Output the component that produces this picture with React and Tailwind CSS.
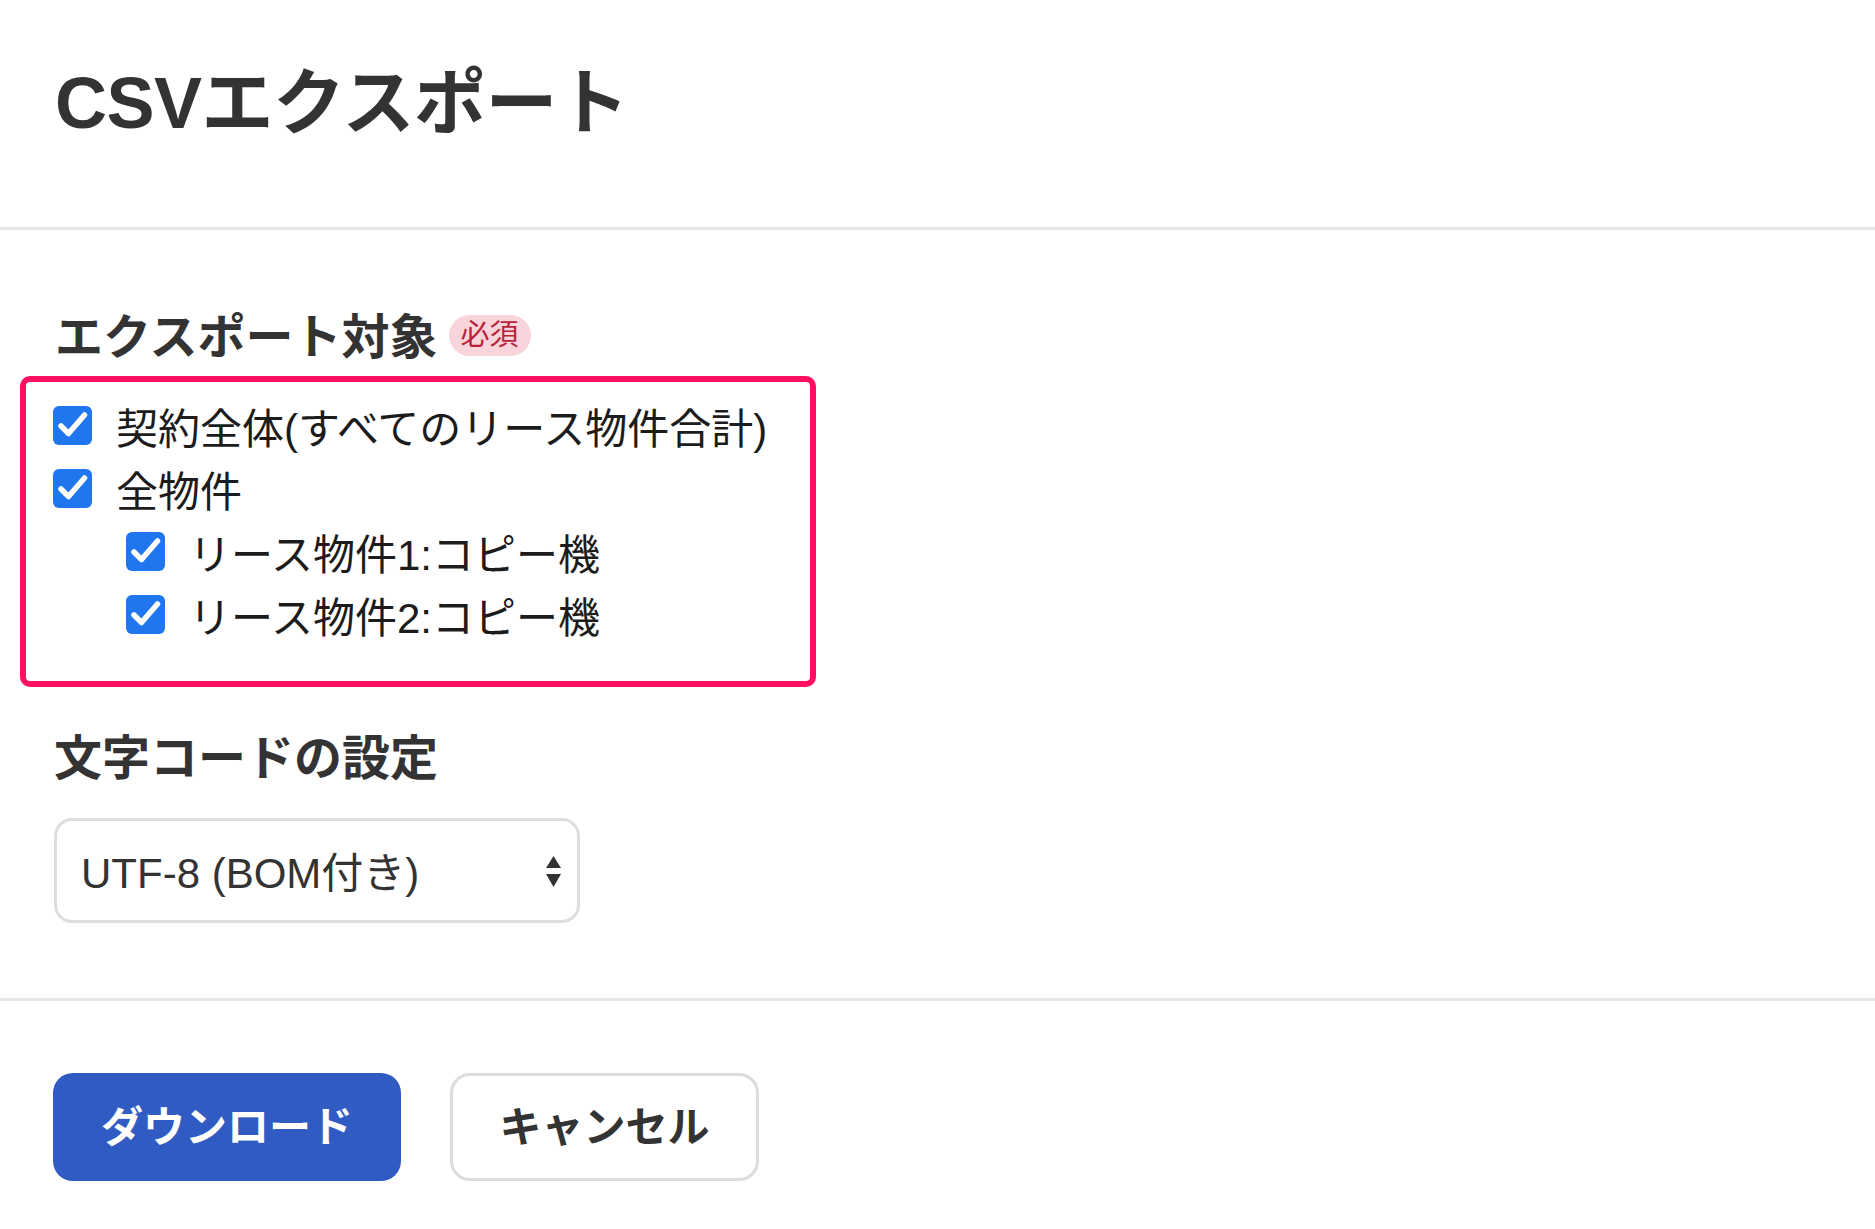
import React, { useState } from "react";

const FONT = { fontFamily: '"Liberation Sans", "Noto Sans CJK JP", sans-serif' };

function CheckBox({ checked, onChange }) {
    return (
        <button
            type="button"
            onClick={onChange}
            className={`flex h-[39px] w-[39px] shrink-0 items-center justify-center rounded-[6px] ${checked ? "bg-[#1f76ee]" : "border-2 border-[#999] bg-white"}`}
        >
            {checked && (
                <svg viewBox="0 0 39 39" className="h-[39px] w-[39px]">
                    <path d="M8 20 L15.5 27.5 L31.5 9" fill="none" stroke="#fff" strokeWidth="5.5" strokeLinecap="round" strokeLinejoin="round" />
                </svg>
            )}
        </button>
    );
}

function Row({ label, checked, onChange, indent }) {
    return (
        <label className={`flex h-[63px] items-center gap-[24px] ${indent ? "pl-[73px]" : ""}`}>
            <CheckBox checked={checked} onChange={onChange} />
            <span className="mt-[8px] text-[42px] leading-none text-[#1c1c1c]">{label}</span>
        </label>
    );
}

export default function App() {
    const [items, setItems] = useState({ all: true, props: true, p1: true, p2: true });
    const toggle = (k) => setItems((s) => ({ ...s, [k]: !s[k] }));

    return (
        <div className="min-h-screen w-full bg-white text-[#333]" style={FONT}>
            {/* header */}
            <div className="h-[230px] border-b-[3px] border-[#e6e6e6] px-[55px] pt-[67px]">
                <h1 className="text-[72px] font-bold leading-none tracking-[-0.5px]">CSVエクスポート</h1>
            </div>

            <div className="border-b-[3px] border-[#e6e6e6] pb-[75px] pt-[84px]">
                <div className="flex items-center gap-[11px] px-[55px]">
                    <h2 className="text-[48px] font-bold leading-none">エクスポート対象</h2>
                    <span className="-mt-[6px] flex h-[41px] items-center rounded-full bg-[#f9d5db] px-[12px] text-[29px] leading-none text-[#b8233a]">必須</span>
                </div>

                <div className="ml-[20px] mt-[14px] w-[796px] rounded-[10px] border-[6px] border-[#ff1060] pb-[35px] pl-[27px] pt-[12px]">
                    <Row label="契約全体(すべてのリース物件合計)" checked={items.all} onChange={() => toggle("all")} />
                    <Row label="全物件" checked={items.props} onChange={() => toggle("props")} />
                    <Row label="リース物件1:コピー機" checked={items.p1} onChange={() => toggle("p1")} indent />
                    <Row label="リース物件2:コピー機" checked={items.p2} onChange={() => toggle("p2")} indent />
                </div>

                <div className="px-[54px] pt-[48px]">
                    <h2 className="text-[48px] font-bold leading-none">文字コードの設定</h2>
                    <div className="relative mt-[35px] w-[526px]">
                        <select
                            defaultValue="utf8bom"
                            className="h-[105px] w-full appearance-none rounded-[18px] border-[3px] border-[#dedede] bg-white pl-[24px] pt-[5px] text-[42px] text-[#333] outline-none"
                            style={FONT}
                        >
                            <option value="utf8bom">UTF-8 (BOM付き)</option>
                            <option value="utf8">UTF-8</option>
                            <option value="sjis">Shift_JIS</option>
                        </select>
                        <svg viewBox="0 0 15 31" className="pointer-events-none absolute right-[19px] top-[38px] h-[31px] w-[15px]">
                            <path d="M0 12 L7.5 0 L15 12 Z" fill="#333" />
                            <path d="M0 18 L7.5 31 L15 18 Z" fill="#333" />
                        </svg>
                    </div>
                </div>
            </div>

            <div className="flex gap-[49px] px-[53px] pt-[72px]">
                <button className="flex h-[108px] w-[348px] items-center justify-center rounded-[20px] bg-[#2f5bc3] text-[42px] font-bold text-white">
                    ダウンロード
                </button>
                <button className="flex h-[108px] w-[309px] items-center justify-center rounded-[20px] border-[3px] border-[#dcdcdc] bg-white text-[42px] font-bold text-[#333]">
                    キャンセル
                </button>
            </div>
        </div>
    );
}
